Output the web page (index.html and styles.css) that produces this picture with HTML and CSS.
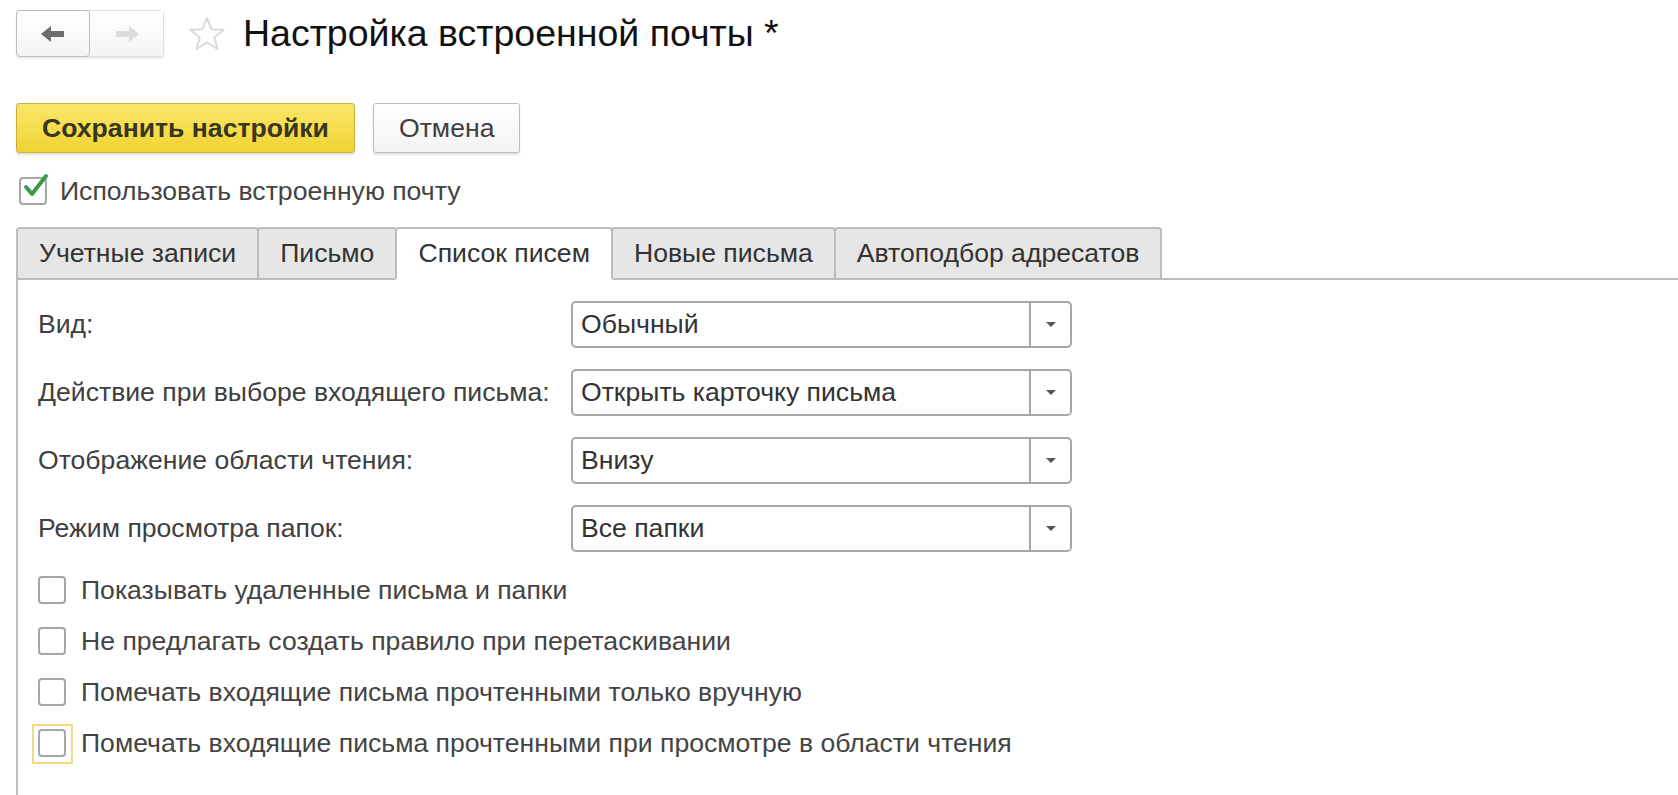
FILE: index.html
```html
<!DOCTYPE html>
<html lang="ru">
<head>
  <meta charset="UTF-8" />
  <title>Настройка встроенной почты</title>
  <link rel="stylesheet" href="styles.css">
</head>
<body>
  <header class="topbar">
    <div class="nav">
      <button class="nav-btn back" type="button">
        <svg width="26" height="20" viewBox="0 0 26 20"><path d="M1 10 L11 2 L11 7 L24 7 L24 13 L11 13 L11 18 Z" fill="#6e6e6e"/></svg>
      </button>
      <button class="nav-btn fwd" type="button">
        <svg width="26" height="20" viewBox="0 0 26 20"><path d="M25 10 L15 2 L15 7 L2 7 L2 13 L15 13 L15 18 Z" fill="#dcdcdc"/></svg>
      </button>
    </div>
    <svg class="star" width="38" height="36" viewBox="0 0 38 36"><path d="M19 2 L23.6 13.2 L35.6 13.8 L26.3 21.4 L29.4 33 L19 26.5 L8.6 33 L11.7 21.4 L2.4 13.8 L14.4 13.2 Z" fill="none" stroke="#dadada" stroke-width="2" stroke-linejoin="round"/></svg>
    <h1>Настройка встроенной почты *</h1>
  </header>

  <div class="toolbar">
    <button class="btn btn-primary" type="button">Сохранить настройки</button>
    <button class="btn" type="button">Отмена</button>
  </div>

  <label class="check main-check">
    <span class="box checked">
      <svg width="30" height="28" viewBox="0 0 30 28"><path d="M5 14 L11 21 L25 3" fill="none" stroke="#3a9a4a" stroke-width="4" stroke-linecap="round" stroke-linejoin="round"/></svg>
    </span>
    Использовать встроенную почту
  </label>

  <div class="tabs">
    <div class="tab">Учетные записи</div>
    <div class="tab">Письмо</div>
    <div class="tab active">Список писем</div>
    <div class="tab">Новые письма</div>
    <div class="tab">Автоподбор адресатов</div>
    <div class="tab-rest"></div>
  </div>

  <div class="panel">
    <div class="fields">
      <div class="field-label">Вид:</div>
      <div class="select"><span class="value">Обычный</span><span class="arrow"></span></div>

      <div class="field-label">Действие при выборе входящего письма:</div>
      <div class="select"><span class="value">Открыть карточку письма</span><span class="arrow"></span></div>

      <div class="field-label">Отображение области чтения:</div>
      <div class="select"><span class="value">Внизу</span><span class="arrow"></span></div>

      <div class="field-label">Режим просмотра папок:</div>
      <div class="select"><span class="value">Все папки</span><span class="arrow"></span></div>
    </div>

    <div class="checks">
      <label class="check"><span class="box"></span>Показывать удаленные письма и папки</label>
      <label class="check"><span class="box"></span>Не предлагать создать правило при перетаскивании</label>
      <label class="check"><span class="box"></span>Помечать входящие письма прочтенными только вручную</label>
      <label class="check focused"><span class="box"></span>Помечать входящие письма прочтенными при просмотре в области чтения</label>
    </div>
  </div>
</body>
</html>
```

FILE: styles.css
```css
body {
  font-family: "Liberation Sans", Arial, sans-serif;
  color: #404040;
  background: #fff;
  margin: 0;
  padding: 0 0 0 16px;
  overflow: hidden;
}

/* header */
.topbar {
  display: flex;
  align-items: center;
  height: 45px;
  margin-top: 11px;
}

.nav {
  display: flex;
  height: 45px;
  border: 1px solid #dedede;
  border-radius: 4px;
  box-shadow: 0 2px 2px rgba(0, 0, 0, 0.08);
}

.nav-btn {
  width: 73px;
  border: none;
  background: linear-gradient(#fff, #f4f4f4);
  display: flex;
  align-items: center;
  justify-content: center;
  padding: 0;
}

.nav-btn.back {
  border: 1px solid #bdbdbd;
  border-radius: 4px;
  margin: -1px 0 -1px -1px;
  width: 74px;
}

.star {
  margin-left: 24px;
}

h1 {
  font-size: 37.5px;
  font-weight: normal;
  color: #111;
  margin: 0 0 0 17px;
}

/* buttons */
.toolbar {
  display: flex;
  gap: 18px;
  margin-top: 47px;
}

.btn {
  height: 50px;
  padding: 0 25px;
  font-family: inherit;
  font-size: 26.6px;
  color: #404040;
  background: linear-gradient(#fff, #f3f3f3);
  border: 1px solid #bcbcbc;
  border-radius: 3px;
  box-shadow: 0 2px 2px rgba(0, 0, 0, 0.12);
}

.btn-primary {
  width: 339px;
  padding: 0;
  font-weight: bold;
  color: #3a3520;
  background: linear-gradient(#f9e76a, #f0d432);
  border-color: #c9b040;
}

/* checkboxes */
.check {
  display: flex;
  align-items: center;
  font-size: 26.6px;
  color: #444;
}

.box {
  box-sizing: border-box;
  width: 28px;
  height: 28px;
  border: 2px solid #a6a6a6;
  border-radius: 4px;
  background: #fff;
  margin-right: 15px;
  flex-shrink: 0;
  position: relative;
}

.box svg {
  position: absolute;
  left: 0;
  top: -6px;
}

.main-check {
  margin-top: 24px;
  margin-left: 3px;
  height: 28px;
}

.main-check .box {
  margin-right: 13px;
}

/* tabs */
.tabs {
  display: flex;
  margin-top: 22px;
  height: 53px;
}

.tab {
  box-sizing: border-box;
  padding: 0 21px;
  display: flex;
  align-items: center;
  font-size: 26.6px;
  color: #333;
  background: #e6e6e6;
  border: 2px solid #bcbcbc;
  border-radius: 4px 4px 0 0;
  margin-right: -2px;
}

.tab.active {
  background: #fff;
  border-bottom-color: #fff;
  position: relative;
  z-index: 1;
}

.tab-rest {
  flex: 1;
  border-bottom: 2px solid #bcbcbc;
}

/* panel */
.panel {
  border-left: 2px solid #bcbcbc;
  height: 520px;
  padding-left: 20px;
}

.fields {
  display: grid;
  grid-template-columns: 533px 501px;
  row-gap: 21px;
  padding-top: 21px;
  align-items: center;
}

.field-label {
  font-size: 26.6px;
  color: #404040;
}

.select {
  box-sizing: border-box;
  height: 47px;
  display: flex;
  align-items: center;
  border: 2px solid #a6a6a6;
  border-radius: 5px;
  font-size: 26.6px;
  color: #333;
}

.select .value {
  flex: 1;
  padding-left: 8px;
}

.select .arrow {
  width: 39px;
  height: 100%;
  border-left: 2px solid #a6a6a6;
  display: flex;
  align-items: center;
  justify-content: center;
}

.select .arrow::after {
  content: "";
  border-left: 5px solid transparent;
  border-right: 5px solid transparent;
  border-top: 5px solid #555;
}

.checks {
  display: flex;
  flex-direction: column;
  gap: 23px;
  margin-top: 24px;
}

.checks .check {
  height: 28px;
}

.focused .box::before {
  content: "";
  position: absolute;
  left: -8px;
  top: -7px;
  right: -9px;
  bottom: -9px;
  border: 2px solid #f1dc86;
}
```
